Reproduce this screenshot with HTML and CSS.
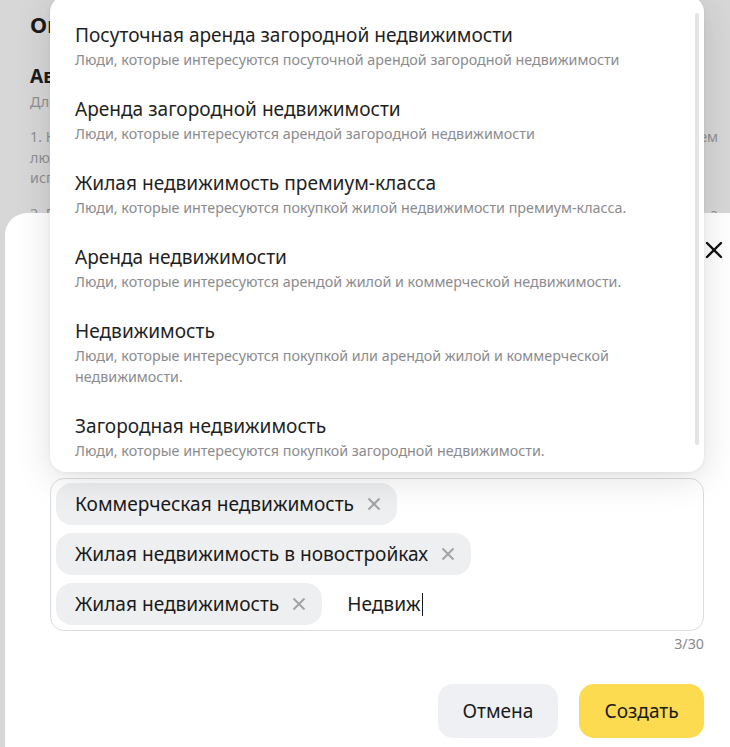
FILE: index.html
```html
<!DOCTYPE html>
<html lang="ru">
<head>
<meta charset="utf-8">
<link rel="stylesheet" href="styles.css">
</head>
<body>
<div class="page">
  <h1 class="page-title">Описание аудитории</h1>
  <h2 class="page-sub">Автоматические сегменты</h2>
  <p class="page-text">Для настройки аудитории</p>
  <div class="page-para">
    <div class="line"><span>1. Найдите сегмент по интересам</span><span>ем</span></div>
    <div class="line"><span>людей, которые</span></div>
    <div class="line"><span>используют</span></div>
  </div>
  <div class="page-para">
    <div class="line"><span>2. Выберите</span><span>а</span></div>
  </div>
</div>

<div class="modal">
  <button class="close" aria-label="Закрыть">
    <svg viewBox="0 0 20 20" width="20" height="20"><path d="M3 3 L17 17 M17 3 L3 17" stroke="#111" stroke-width="2.4" stroke-linecap="round" fill="none"/></svg>
  </button>
  <div class="field">
    <span class="chip">Коммерческая недвижимость<svg class="chip-x" viewBox="0 0 16 16" width="16" height="16"><path d="M2.5 2.5 L13.5 13.5 M13.5 2.5 L2.5 13.5" stroke="#a3a3a6" stroke-width="2" fill="none"/></svg></span>
    <span class="chip">Жилая недвижимость в новостройках<svg class="chip-x" viewBox="0 0 16 16" width="16" height="16"><path d="M2.5 2.5 L13.5 13.5 M13.5 2.5 L2.5 13.5" stroke="#a3a3a6" stroke-width="2" fill="none"/></svg></span>
    <span class="chip">Жилая недвижимость<svg class="chip-x" viewBox="0 0 16 16" width="16" height="16"><path d="M2.5 2.5 L13.5 13.5 M13.5 2.5 L2.5 13.5" stroke="#a3a3a6" stroke-width="2" fill="none"/></svg></span>
    <span class="query">Недвиж<span class="caret"></span></span>
  </div>
  <div class="counter">3/30</div>
  <div class="actions">
    <button class="btn btn-cancel">Отмена</button>
    <button class="btn btn-create">Создать</button>
  </div>
</div>

<div class="dropdown">
  <div class="item">
    <div class="item-title">Посуточная аренда загородной недвижимости</div>
    <div class="item-desc">Люди, которые интересуются посуточной арендой загородной недвижимости</div>
  </div>
  <div class="item">
    <div class="item-title">Аренда загородной недвижимости</div>
    <div class="item-desc">Люди, которые интересуются арендой загородной недвижимости</div>
  </div>
  <div class="item">
    <div class="item-title">Жилая недвижимость премиум-класса</div>
    <div class="item-desc">Люди, которые интересуются покупкой жилой недвижимости премиум-класса.</div>
  </div>
  <div class="item">
    <div class="item-title">Аренда недвижимости</div>
    <div class="item-desc">Люди, которые интересуются арендой жилой и коммерческой недвижимости.</div>
  </div>
  <div class="item">
    <div class="item-title">Недвижимость</div>
    <div class="item-desc narrow">Люди, которые интересуются покупкой или арендой жилой и коммерческой недвижимости.</div>
  </div>
  <div class="item">
    <div class="item-title">Загородная недвижимость</div>
    <div class="item-desc">Люди, которые интересуются покупкой загородной недвижимости.</div>
  </div>
  <div class="scrollbar"></div>
</div>
</body>
</html>
```

FILE: styles.css
```css
* { box-sizing: border-box; }
html, body {
  margin: 0;
  padding: 0;
  width: 730px;
  height: 747px;
  overflow: hidden;
}
body {
  position: relative;
  background: #d7d7d8;
  font-family: "Noto Sans", "Open Sans", sans-serif;
  color: #1f1f1f;
}

/* background page */
.page {
  padding: 10px 12px 0 30px;
}
.page-title {
  margin: 0;
  font-size: 22px;
  line-height: 28px;
  font-weight: 700;
  color: #1b1b1b;
}
.page-sub {
  margin: 25px 0 0;
  font-size: 19px;
  line-height: 26px;
  font-weight: 700;
  color: #1b1b1b;
}
.page-text {
  margin: 3px 0 0;
  font-size: 14.3px;
  line-height: 20px;
  color: #8f8f90;
}
.page-para {
  margin-top: 15px;
  font-size: 14.3px;
  line-height: 20.5px;
  color: #8f8f90;
}
.page-para .line {
  display: flex;
  justify-content: space-between;
}

/* modal */
.modal {
  position: absolute;
  left: 5px;
  top: 213px;
  width: 760px;
  height: 560px;
  background: #ffffff;
  border-radius: 22px 0 0 0;
  padding: 265px 0 0 45px;
}
.close {
  position: absolute;
  left: 699px;
  top: 27px;
  width: 20px;
  height: 20px;
  padding: 0;
  border: 0;
  background: none;
}
.close svg { display: block; }

.field {
  width: 654px;
  border: 1px solid #dcdcdf;
  border-radius: 14px;
  padding: 4px 5px 5px;
  display: flex;
  flex-wrap: wrap;
  align-items: center;
  row-gap: 8px;
  column-gap: 25px;
}
.chip {
  display: inline-flex;
  align-items: center;
  height: 42px;
  padding: 0 15px 0 19px;
  background: #eeeff1;
  border-radius: 16px;
  font-size: 19.1px;
  color: #1a1a1a;
  white-space: nowrap;
}
.chip-x {
  margin-left: 12px;
  flex: none;
}
.query {
  display: inline-flex;
  align-items: center;
  font-size: 19.1px;
  color: #1a1a1a;
}
.caret {
  display: inline-block;
  width: 1.5px;
  height: 23px;
  background: #1a1a1a;
  margin-left: 1px;
}

.counter {
  width: 654px;
  text-align: right;
  font-size: 14.3px;
  line-height: 20px;
  color: #8a8a8d;
  margin-top: 3px;
}
.actions {
  width: 654px;
  display: flex;
  justify-content: flex-end;
  gap: 21px;
  margin-top: 30px;
}
.btn {
  height: 54px;
  border: 0;
  border-radius: 15px;
  font-family: inherit;
  font-size: 19.1px;
  color: #1a1a1a;
  padding: 0;
}
.btn-cancel {
  width: 120px;
  background: #eef0f3;
}
.btn-create {
  width: 125px;
  background: #fddb50;
}

/* dropdown */
.dropdown {
  position: absolute;
  left: 50px;
  top: -4px;
  width: 654px;
  height: 476px;
  overflow: hidden;
  background: #ffffff;
  border-radius: 16px;
  padding-top: 13.5px;
  box-shadow: 0 6px 36px rgba(0, 0, 0, 0.13), 0 1px 4px rgba(0, 0, 0, 0.05);
}
.item {
  padding: 13.5px 40px 14px 25px;
}
.item-title {
  font-size: 19.1px;
  line-height: 24px;
  color: #1f1f1f;
}
.item-desc {
  margin-top: 1.5px;
  font-size: 14.3px;
  line-height: 21px;
  color: #8b8b8e;
}
.item-desc.narrow {
  max-width: 550px;
}
.scrollbar {
  position: absolute;
  right: 5px;
  top: 17px;
  width: 4px;
  height: 432px;
  border-radius: 2px;
  background: #e4e4e6;
}
```
